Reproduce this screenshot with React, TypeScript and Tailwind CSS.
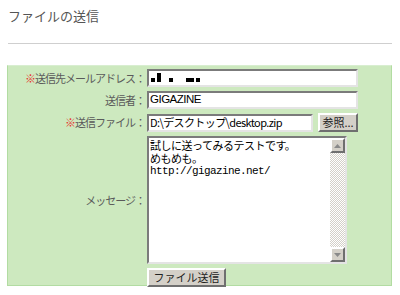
import React from "react";

const jp = "font-['Noto_Sans_CJK_JP','Noto_Sans',sans-serif]";

const inset =
  "border-2 border-t-[#7b7b7b] border-l-[#7b7b7b] border-b-[#e4e4e4] border-r-[#e4e4e4] bg-white";

const outset =
  "border-2 border-t-[#ffffff] border-l-[#ffffff] border-b-[#6f6f6f] border-r-[#6f6f6f] bg-[#d4d0c8]";

const Label = ({ text, required }: { text: string; required?: boolean }) => (
  <div className="flex items-center justify-end whitespace-nowrap pr-[2px] text-[11px] leading-none tracking-[-1px] text-[#5a5a5a]">
    {required && <span className="text-[#e8342e]">※</span>}
    {text}：
  </div>
);

const ArrowBtn = ({ up }: { up?: boolean }) => (
  <div className={`flex h-[15px] w-[15px] items-center justify-center ${outset} border`}>
    <svg width="7" height="4" viewBox="0 0 7 4">
      {up ? (
        <path d="M3.5 0 L7 4 L0 4 Z" fill="#8a8a8a" />
      ) : (
        <path d="M0 0 L7 0 L3.5 4 Z" fill="#8a8a8a" />
      )}
    </svg>
  </div>
);

export default function App() {
  return (
    <div className={`h-[295px] w-[400px] overflow-hidden bg-white ${jp}`}>
      <div className="pl-[8px] pt-[9px] text-[13px] leading-[14px] text-[#555]">
        ファイルの送信
      </div>
      <div className="ml-[8px] mr-[8px] mt-[20px] h-px bg-[#cfcfcf]" />

      <div className="ml-[7px] mt-[21px] h-[221px] w-[385px] border border-[#b2dca2] border-t-[#d8eed0] bg-[#cde9bf] pt-[3px]">
        <div className="grid grid-cols-[139px_1fr] gap-y-[4px]">
          <Label text="送信先メールアドレス" required />
          <div className={`h-[18px] w-[211px] ${inset} flex items-end gap-[2px] pb-[3px] pl-[2px]`}>
            <span className="h-[4px] w-[4px] bg-black" />
            <span className="h-[9px] w-[4px] bg-black" />
            <span className="ml-[6px] h-[4px] w-[4px] bg-black" />
            <span className="ml-[11px] h-[4px] w-[8px] bg-black" />
            <span className="h-[4px] w-[4px] bg-black" />
          </div>

          <Label text="送信者" />
          <div className={`flex h-[18px] w-[211px] items-center pl-[1px] text-[11.5px] text-black ${inset} font-['Liberation_Sans',sans-serif] tracking-[-0.5px]`}>
            GIGAZINE
          </div>

          <Label text="送信ファイル" required />
          <div className="flex items-center gap-[5px]">
            <div className={`flex h-[18px] w-[166px] items-center pl-[1px] text-[11px] text-black ${inset} tracking-[-0.6px]`}>
              D:\デスクトップ\desktop.zip
            </div>
            <div className={`flex h-[19px] w-[40px] items-center justify-center text-[11px] text-[#222] ${outset}`}>
              参照...
            </div>
          </div>

          <Label text="メッセージ" />
          <div className={`flex h-[128px] w-[200px] ${inset}`}>
            <div className="flex-1 pl-[1px] pt-[1px] text-[11px] leading-[13px] text-black">
              <div className="tracking-[-0.5px]">試しに送ってみるテストです。</div>
              <div className="tracking-[-0.5px]">めもめも。</div>
              <div className="font-['Liberation_Mono',monospace] text-[11px] tracking-[-0.6px]">
                http://gigazine.net/
              </div>
            </div>
            <div className="flex w-[15px] flex-col bg-[repeating-conic-gradient(#d4d0c8_0_25%,#ffffff_0_50%)] bg-[length:2px_2px]">
              <ArrowBtn up />
              <div className="flex-1" />
              <ArrowBtn />
            </div>
          </div>

          <div />
          <div className={`flex h-[19px] w-[79px] items-center justify-center text-[11px] text-[#222] ${outset}`}>
            ファイル送信
          </div>
        </div>
      </div>
    </div>
  );
}
